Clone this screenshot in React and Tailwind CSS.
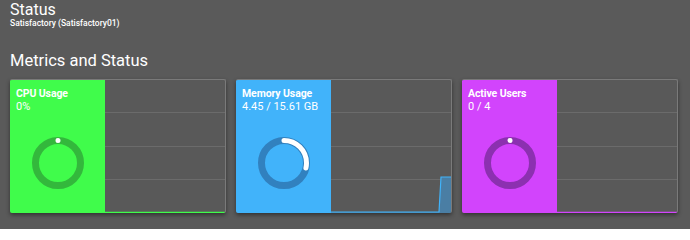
import React from 'react';

const METRICS = [
  {
    key: 'cpu',
    title: 'CPU Usage',
    value: '0%',
    percent: 0,
    color: 'bg-[#40fc4b]',
    track: '#33b83c',
    line: '#40fc4b',
    fill: null,
  },
  {
    key: 'mem',
    title: 'Memory Usage',
    value: '4.45 / 15.61 GB',
    percent: 4.45 / 15.61,
    color: 'bg-[#41b3fa]',
    track: '#3181bf',
    line: '#41b3fa',
    fill: 'bar',
  },
  {
    key: 'users',
    title: 'Active Users',
    value: '0 / 4',
    percent: 0,
    color: 'bg-[#d244fc]',
    track: '#8c30b0',
    line: '#d244fc',
    fill: null,
  },
];

const Ring = ({ percent, track }) => {
  const r = 22.5;
  const c = 2 * Math.PI * r;
  const len = Math.max(percent * c, 0.01);
  return (
    <svg width="54" height="54" viewBox="0 0 54 54">
      <circle cx="27" cy="27" r={r} fill="none" stroke={track} strokeWidth="7" />
      <circle
        cx="27"
        cy="27"
        r={r}
        fill="none"
        stroke="#ffffff"
        strokeWidth="5"
        strokeLinecap="round"
        strokeDasharray={`${len} ${c}`}
        transform="rotate(-90 27 27)"
      />
    </svg>
  );
};

const MetricCard = ({ metric }) => (
  <div className="flex h-[134px] w-[216px] overflow-hidden rounded-[2px] border-t border-r border-[#7a7a7a] bg-[#595959] shadow-[0_2px_4px_rgba(0,0,0,0.45)]">
    <div className={`flex w-[95px] flex-col ${metric.color} px-[6px] pt-[7px] text-white`}>
      <div className="text-[10.5px] font-bold leading-[13px] tracking-[-0.1px]">{metric.title}</div>
      <div className="text-[11px] leading-[13px]">{metric.value}</div>
      <div className="mt-[23px] flex justify-center">
        <Ring percent={metric.percent} track={metric.track} />
      </div>
    </div>
    <div className="relative flex-1">
      <div className="grid h-full grid-rows-4">
        <div className="border-b border-[#6b6b6b]" />
        <div className="border-b border-[#6b6b6b]" />
        <div className="border-b border-[#6b6b6b]" />
        <div />
      </div>
      <svg className="absolute inset-0" width="100%" height="100%" viewBox="0 0 120 133" preserveAspectRatio="none">
        {metric.fill === 'bar' ? (
          <>
            <path d="M0 132 L108 132 L110 97 L120 97 L120 133 L0 133 Z" fill="#4a7ea4" />
            <path d="M0 132 L108 132 L110 97 L120 97" fill="none" stroke={metric.line} strokeWidth="1.2" />
          </>
        ) : (
          <path d="M0 132.4 L120 132.4" fill="none" stroke={metric.line} strokeWidth="1.2" />
        )}
      </svg>
    </div>
  </div>
);

const App = () => (
  <div className="min-h-[229px] w-[690px] bg-[#5a5a5a] font-['Roboto',sans-serif] text-white">
    <div className="px-[10px] pt-[1px]">
      <div className="text-[16px] leading-[17px]">Status</div>
      <div className="text-[8.5px] font-medium leading-[10px]">Satisfactory (Satisfactory01)</div>
      <h1 className="mt-[23px] text-[16.5px] leading-[20px]">Metrics and Status</h1>
      <div className="mt-[8px] flex gap-[10px]">
        {METRICS.map((metric) => (
          <MetricCard key={metric.key} metric={metric} />
        ))}
      </div>
    </div>
  </div>
);

export default App;
